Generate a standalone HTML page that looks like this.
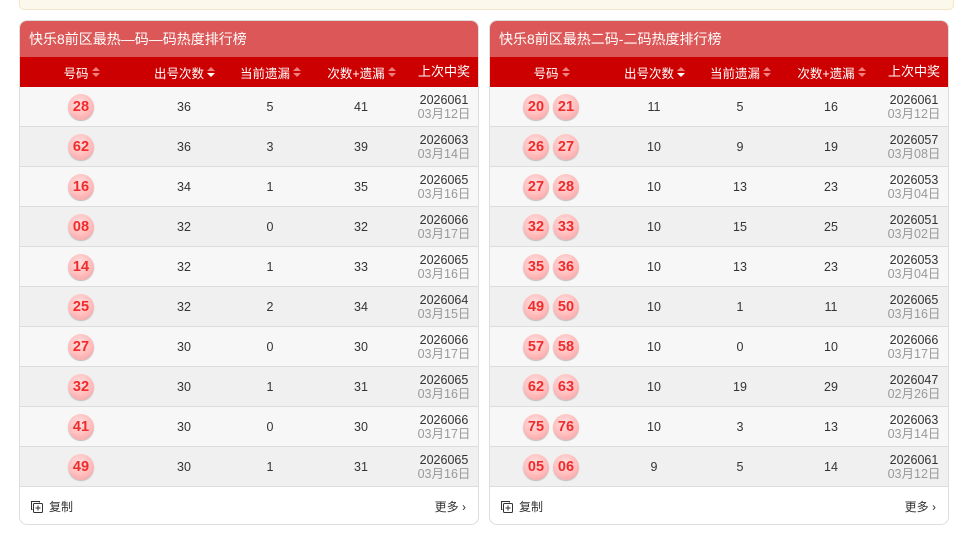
<!DOCTYPE html>
<html><head><meta charset="utf-8"><style>
*{margin:0;padding:0;box-sizing:border-box}
body{width:954px;height:534px;background:#fff;font-family:"Liberation Sans","Noto Sans CJK SC",sans-serif;position:relative;overflow:hidden}
.top{position:absolute;left:19px;top:-6px;width:935px;height:16px;background:#fdf8ec;border:1px solid #f1e6c8;border-radius:0 0 5px 5px}
.p{position:absolute;top:20px;width:460px;height:505px;border:1px solid #ddd;border-radius:8px;overflow:hidden;background:#fff}
.h{height:36px;background:#dc5757;color:#fff;font-size:14px;line-height:36px;padding-left:9px}
.ch{height:30px;background:#cc0000;color:#fff;font-size:12.5px;position:relative}
.r{height:40px;position:relative;border-bottom:1px solid #ddd;font-size:12.5px;color:#333}
.r:nth-child(odd){background:#f7f7f7}.r:nth-child(even){background:#f0f0f0}
.c{position:absolute;top:0;height:100%;display:flex;align-items:center;justify-content:center;text-align:center}
.c1{left:0;width:122px}.c2{left:122px;width:84px}.c3{left:206px;width:88px}.c4{left:294px;width:94px}.c5{left:388px;width:72px;line-height:14px;flex-direction:column}
.ch .c5{flex-direction:row;font-size:13px}
.c5 span{color:#999}
.b{width:26px;height:26px;border-radius:50%;background:radial-gradient(circle at 45% 35%,#ffe0e0 0%,#ffbcbc 55%,#f09a9a 100%);box-shadow:0 1px 1px #bbb;color:#f02b2b;font-weight:bold;font-size:14.5px;line-height:26px;text-align:center;margin:0 2px}
.ar{display:inline-block;margin-left:3px;vertical-align:middle;width:7px;height:10px;position:relative}
.ar:before,.ar:after{content:"";position:absolute;left:0;border-left:4px solid transparent;border-right:4px solid transparent}
.ar:before{top:0;border-bottom:4px solid #f08080}.ar:after{bottom:0;border-top:4px solid #f08080}
.ar.w:after{border-top-color:#fff}
.f{height:37px;position:relative;font-size:12px;color:#333}
.cp{position:absolute;left:10px;top:11px;display:flex;align-items:center}
.mo{position:absolute;right:12px;top:11px}
</style></head><body>
<div class="top"></div>

<div class="p" style="left:19px">
<div class="h">快乐8前区最热—码—码热度排行榜</div>
<div class="ch"><div class="c c1">号码<i class="ar"></i></div><div class="c c2">出号次数<i class="ar w"></i></div><div class="c c3">当前遗漏<i class="ar"></i></div><div class="c c4">次数+遗漏<i class="ar"></i></div><div class="c c5">上次中奖</div></div>
<div>
<div class="r"><div class="c c1"><div class="b">28</div></div><div class="c c2">36</div><div class="c c3">5</div><div class="c c4">41</div><div class="c c5">2026061<span>03月12日</span></div></div>
<div class="r"><div class="c c1"><div class="b">62</div></div><div class="c c2">36</div><div class="c c3">3</div><div class="c c4">39</div><div class="c c5">2026063<span>03月14日</span></div></div>
<div class="r"><div class="c c1"><div class="b">16</div></div><div class="c c2">34</div><div class="c c3">1</div><div class="c c4">35</div><div class="c c5">2026065<span>03月16日</span></div></div>
<div class="r"><div class="c c1"><div class="b">08</div></div><div class="c c2">32</div><div class="c c3">0</div><div class="c c4">32</div><div class="c c5">2026066<span>03月17日</span></div></div>
<div class="r"><div class="c c1"><div class="b">14</div></div><div class="c c2">32</div><div class="c c3">1</div><div class="c c4">33</div><div class="c c5">2026065<span>03月16日</span></div></div>
<div class="r"><div class="c c1"><div class="b">25</div></div><div class="c c2">32</div><div class="c c3">2</div><div class="c c4">34</div><div class="c c5">2026064<span>03月15日</span></div></div>
<div class="r"><div class="c c1"><div class="b">27</div></div><div class="c c2">30</div><div class="c c3">0</div><div class="c c4">30</div><div class="c c5">2026066<span>03月17日</span></div></div>
<div class="r"><div class="c c1"><div class="b">32</div></div><div class="c c2">30</div><div class="c c3">1</div><div class="c c4">31</div><div class="c c5">2026065<span>03月16日</span></div></div>
<div class="r"><div class="c c1"><div class="b">41</div></div><div class="c c2">30</div><div class="c c3">0</div><div class="c c4">30</div><div class="c c5">2026066<span>03月17日</span></div></div>
<div class="r"><div class="c c1"><div class="b">49</div></div><div class="c c2">30</div><div class="c c3">1</div><div class="c c4">31</div><div class="c c5">2026065<span>03月16日</span></div></div>
</div>
<div class="f"><div class="cp"><svg width="14" height="14" viewBox="0 0 14 14" style="margin-right:5px" fill="none" stroke="#333" stroke-width="1"><path d="M9.5 2.5V1.5H1.5V9.5H2.5"/><rect x="3.5" y="3.5" width="9" height="9" rx="1"/><path d="M8 5.5v5M5.5 8h5"/></svg>复制</div><div class="mo">更多 ›</div></div>
</div>

<div class="p" style="left:489px">
<div class="h">快乐8前区最热二码-二码热度排行榜</div>
<div class="ch"><div class="c c1">号码<i class="ar"></i></div><div class="c c2">出号次数<i class="ar w"></i></div><div class="c c3">当前遗漏<i class="ar"></i></div><div class="c c4">次数+遗漏<i class="ar"></i></div><div class="c c5">上次中奖</div></div>
<div>
<div class="r"><div class="c c1"><div class="b">20</div><div class="b">21</div></div><div class="c c2">11</div><div class="c c3">5</div><div class="c c4">16</div><div class="c c5">2026061<span>03月12日</span></div></div>
<div class="r"><div class="c c1"><div class="b">26</div><div class="b">27</div></div><div class="c c2">10</div><div class="c c3">9</div><div class="c c4">19</div><div class="c c5">2026057<span>03月08日</span></div></div>
<div class="r"><div class="c c1"><div class="b">27</div><div class="b">28</div></div><div class="c c2">10</div><div class="c c3">13</div><div class="c c4">23</div><div class="c c5">2026053<span>03月04日</span></div></div>
<div class="r"><div class="c c1"><div class="b">32</div><div class="b">33</div></div><div class="c c2">10</div><div class="c c3">15</div><div class="c c4">25</div><div class="c c5">2026051<span>03月02日</span></div></div>
<div class="r"><div class="c c1"><div class="b">35</div><div class="b">36</div></div><div class="c c2">10</div><div class="c c3">13</div><div class="c c4">23</div><div class="c c5">2026053<span>03月04日</span></div></div>
<div class="r"><div class="c c1"><div class="b">49</div><div class="b">50</div></div><div class="c c2">10</div><div class="c c3">1</div><div class="c c4">11</div><div class="c c5">2026065<span>03月16日</span></div></div>
<div class="r"><div class="c c1"><div class="b">57</div><div class="b">58</div></div><div class="c c2">10</div><div class="c c3">0</div><div class="c c4">10</div><div class="c c5">2026066<span>03月17日</span></div></div>
<div class="r"><div class="c c1"><div class="b">62</div><div class="b">63</div></div><div class="c c2">10</div><div class="c c3">19</div><div class="c c4">29</div><div class="c c5">2026047<span>02月26日</span></div></div>
<div class="r"><div class="c c1"><div class="b">75</div><div class="b">76</div></div><div class="c c2">10</div><div class="c c3">3</div><div class="c c4">13</div><div class="c c5">2026063<span>03月14日</span></div></div>
<div class="r"><div class="c c1"><div class="b">05</div><div class="b">06</div></div><div class="c c2">9</div><div class="c c3">5</div><div class="c c4">14</div><div class="c c5">2026061<span>03月12日</span></div></div>
</div>
<div class="f"><div class="cp"><svg width="14" height="14" viewBox="0 0 14 14" style="margin-right:5px" fill="none" stroke="#333" stroke-width="1"><path d="M9.5 2.5V1.5H1.5V9.5H2.5"/><rect x="3.5" y="3.5" width="9" height="9" rx="1"/><path d="M8 5.5v5M5.5 8h5"/></svg>复制</div><div class="mo">更多 ›</div></div>
</div>
</body></html>
